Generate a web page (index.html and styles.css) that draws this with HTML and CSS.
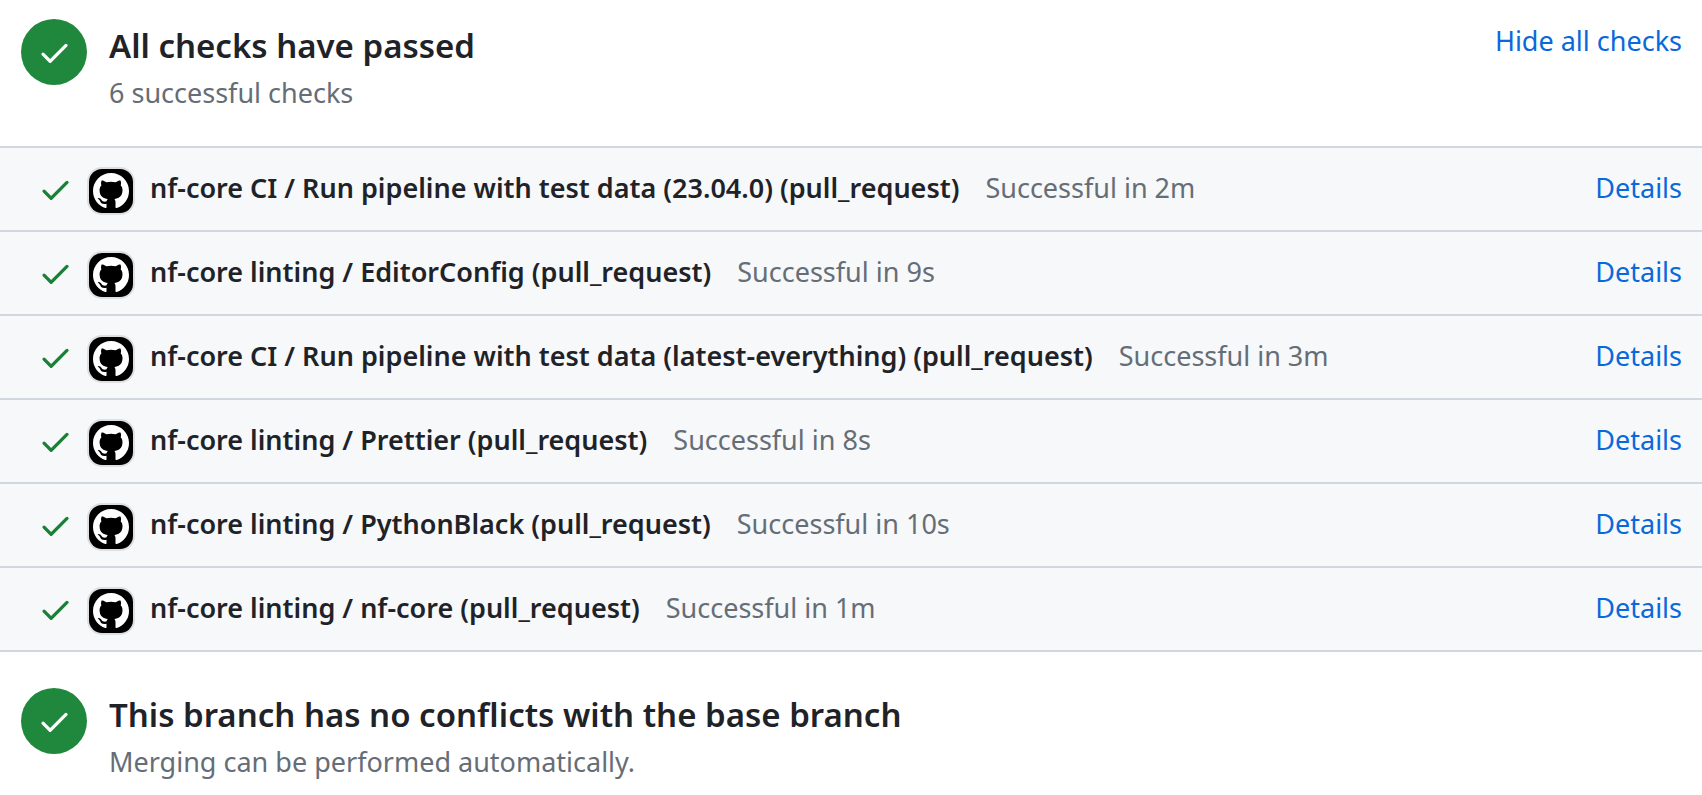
FILE: index.html
```
<!DOCTYPE html>
<html lang="en">
<head>
<meta charset="utf-8">
<title>Checks</title>
<link rel="stylesheet" href="styles.css">
</head>
<body>
<svg class="sprite" aria-hidden="true">
  <symbol id="check" viewBox="0 0 16 16"><path d="M13.78 4.22a.75.75 0 0 1 0 1.06l-7.25 7.25a.75.75 0 0 1-1.06 0L2.22 9.28a.751.751 0 0 1 .018-1.042.751.751 0 0 1 1.042-.018L6 10.94l6.72-6.72a.75.75 0 0 1 1.06 0Z"/></symbol>
  <symbol id="mark" viewBox="0 0 16 16"><path d="M8 0C3.58 0 0 3.58 0 8c0 3.54 2.29 6.53 5.47 7.59.4.07.55-.17.55-.38 0-.19-.01-.82-.01-1.49-2.01.37-2.53-.49-2.69-.94-.09-.23-.48-.94-.82-1.13-.28-.15-.68-.52-.01-.53.63-.01 1.08.58 1.23.82.72 1.21 1.87.87 2.33.66.07-.52.28-.87.51-1.07-1.78-.2-3.64-.89-3.64-3.95 0-.87.31-1.59.82-2.15-.08-.2-.36-1.02.08-2.12 0 0 .67-.21 2.2.82.64-.18 1.32-.27 2-.27.68 0 1.36.09 2 .27 1.53-1.04 2.2-.82 2.2-.82.44 1.1.16 1.92.08 2.12.51.56.82 1.27.82 2.15 0 3.07-1.87 3.75-3.65 3.95.29.25.54.73.54 1.48 0 1.07-.01 1.93-.01 2.2 0 .21.15.46.55.38A8.01 8.01 0 0 0 16 8c0-4.42-3.58-8-8-8z"/></symbol>
</svg>
<main>
  <section class="summary">
    <span class="badge"><svg class="icon"><use href="#check"/></svg></span>
    <div class="summary-text">
      <h2 class="title">All checks have passed</h2>
      <p class="note">6 successful checks</p>
    </div>
    <button type="button" class="toggle">Hide all checks</button>
  </section>
  <ul class="checks">
    <li class="check">
      <svg class="icon passed"><use href="#check"/></svg>
      <span class="avatar"><svg class="mark"><use href="#mark"/></svg></span>
      <p class="label"><strong class="name">nf-core CI / Run pipeline with test data (23.04.0) (pull_request)</strong><span class="status">Successful in 2m</span></p>
      <a class="details" href="#">Details</a>
    </li>
    <li class="check">
      <svg class="icon passed"><use href="#check"/></svg>
      <span class="avatar"><svg class="mark"><use href="#mark"/></svg></span>
      <p class="label"><strong class="name">nf-core linting / EditorConfig (pull_request)</strong><span class="status">Successful in 9s</span></p>
      <a class="details" href="#">Details</a>
    </li>
    <li class="check">
      <svg class="icon passed"><use href="#check"/></svg>
      <span class="avatar"><svg class="mark"><use href="#mark"/></svg></span>
      <p class="label"><strong class="name">nf-core CI / Run pipeline with test data (latest-everything) (pull_request)</strong><span class="status">Successful in 3m</span></p>
      <a class="details" href="#">Details</a>
    </li>
    <li class="check">
      <svg class="icon passed"><use href="#check"/></svg>
      <span class="avatar"><svg class="mark"><use href="#mark"/></svg></span>
      <p class="label"><strong class="name">nf-core linting / Prettier (pull_request)</strong><span class="status">Successful in 8s</span></p>
      <a class="details" href="#">Details</a>
    </li>
    <li class="check">
      <svg class="icon passed"><use href="#check"/></svg>
      <span class="avatar"><svg class="mark"><use href="#mark"/></svg></span>
      <p class="label"><strong class="name">nf-core linting / PythonBlack (pull_request)</strong><span class="status">Successful in 10s</span></p>
      <a class="details" href="#">Details</a>
    </li>
    <li class="check">
      <svg class="icon passed"><use href="#check"/></svg>
      <span class="avatar"><svg class="mark"><use href="#mark"/></svg></span>
      <p class="label"><strong class="name">nf-core linting / nf-core (pull_request)</strong><span class="status">Successful in 1m</span></p>
      <a class="details" href="#">Details</a>
    </li>
  </ul>
  <section class="summary merge">
    <span class="badge"><svg class="icon"><use href="#check"/></svg></span>
    <div class="summary-text">
      <h2 class="title">This branch has no conflicts with the base branch</h2>
      <p class="note">Merging can be performed automatically.</p>
    </div>
  </section>
</main>
</body>
</html>
```
FILE: styles.css
```
* { box-sizing: border-box; }

body {
  margin: 0;
  background: #fff;
  color: #1f2328;
  font-family: "Segoe UI", "Noto Sans", "Open Sans", sans-serif;
  font-size: 27px;
  line-height: 44px;
}

h2, p, ul { margin: 0; padding: 0; }

.sprite { display: none; }

.icon {
  flex: none;
  width: 35px;
  height: 35px;
  fill: #fff;
}

.passed {
  margin-top: 3px;
  fill: #1a7f37;
}

.summary {
  display: flex;
  align-items: flex-start;
  gap: 22px;
  padding: 19px 20px 30px 21px;
}

.merge { padding-top: 36px; }

.badge {
  display: flex;
  flex: none;
  align-items: center;
  justify-content: center;
  width: 66px;
  height: 66px;
  border-radius: 50%;
  background: #1f883d;
}

.summary-text {
  flex: 1;
  padding-top: 3px;
}

.title {
  font-size: 33px;
  font-weight: 600;
  line-height: 48px;
}

.note { color: #656d76; line-height: 46px; }

.toggle {
  padding: 0;
  border: 0;
  background: none;
  color: #0969da;
  font: inherit;
  cursor: pointer;
}

.checks {
  list-style: none;
  border-top: 2px solid #d0d7de;
}

.check {
  display: flex;
  align-items: flex-start;
  padding: 21px 20px 17px 38px;
  border-bottom: 2px solid #d0d7de;
  background: #f6f8fa;
}

.avatar {
  display: flex;
  flex: none;
  align-items: center;
  justify-content: center;
  width: 44px;
  height: 44px;
  margin: 0 17px 0 16px;
  border-radius: 13px;
  background: #000;
  box-shadow: 0 0 0 2px #dddfe1;
}

.mark {
  width: 36px;
  height: 36px;
  fill: #fff;
}

.label {
  flex: 1;
  line-height: 38px;
}

.name {
  margin-right: 26px;
  font-weight: 600;
}

.status { color: #656d76; }

.details {
  color: #0969da;
  line-height: 38px;
  text-decoration: none;
}
```
